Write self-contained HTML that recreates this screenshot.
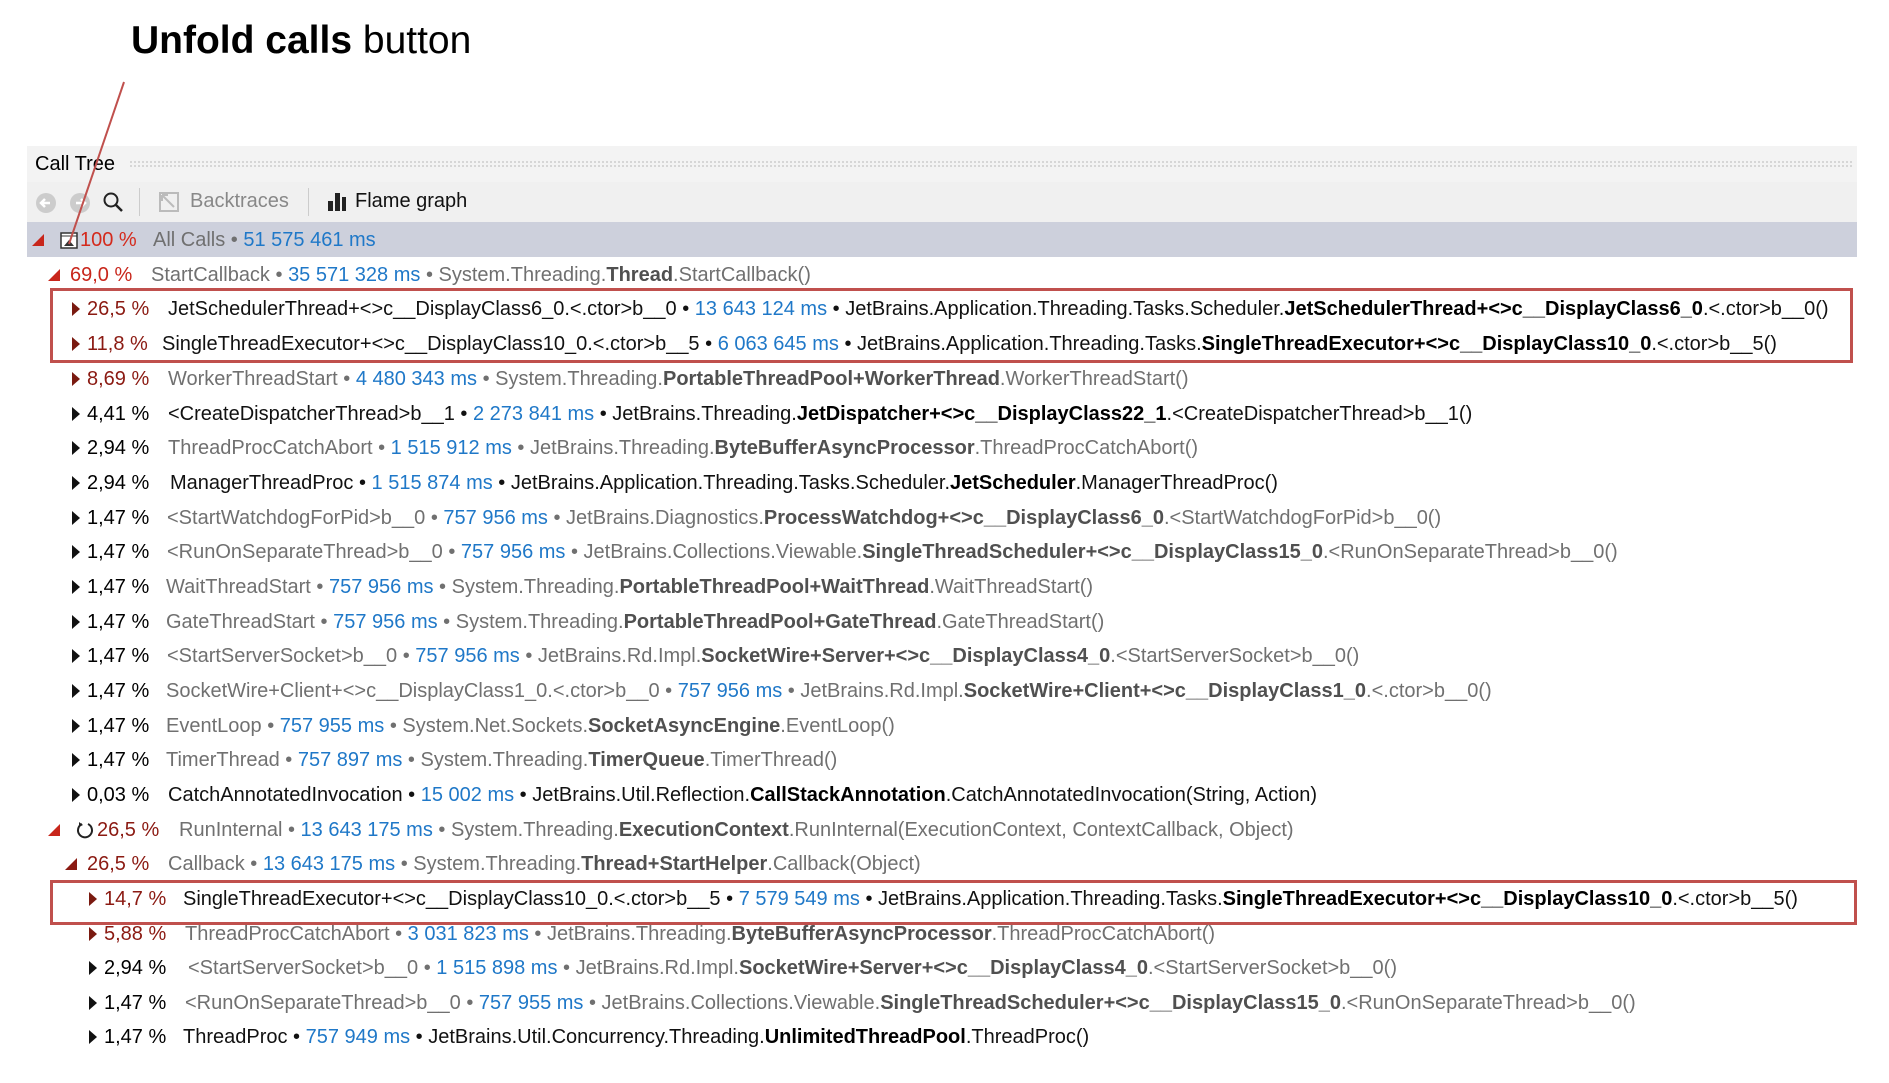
<!DOCTYPE html>
<html><head><meta charset="utf-8"><style>
body{margin:0;width:1889px;height:1083px;background:#fff;position:relative;overflow:hidden;font-family:"Liberation Sans",sans-serif}
.title{position:absolute;left:131px;top:19px;font-size:39px;color:#000}
.hdr{position:absolute;left:27px;top:146px;width:1830px;height:36px;background:#f3f3f3}
.hdr .dots{position:absolute;left:102px;right:4px;top:14px;height:8px;background-image:radial-gradient(#d4d4d4 1px,transparent 1.2px);background-size:4px 4px}
.hdr span{position:absolute;left:8px;top:7px;font-size:20px;color:#000}
.tb{position:absolute;left:27px;top:182px;width:1830px;height:40px;background:#f0f0f0}
.sel{position:absolute;left:27px;top:222px;width:1830px;height:35px;background:#cdd0dc}
.r{position:absolute;height:34px;line-height:34px;font-size:20px;white-space:nowrap;left:0;width:1889px}
.r>*{position:absolute;top:0}
.g{color:#707070}.g b{color:#505050}
.k{color:#111}.k b{color:#000}
.m{color:#1f78c8}
.p{font-size:20px}
.pr{color:#8b1a12}.pb{color:#000}.pR{color:#d42a1c}
.tc{width:0;height:0;border-top:7px solid transparent;border-bottom:7px solid transparent;border-left:8px solid #111;top:10px}
.tc.d{border-left-color:#7a1a10}
.te{width:0;height:0;border-left:12px solid transparent;border-bottom:12px solid #c8261b;top:11px}
.box{position:absolute;border:3px solid #c0504d;box-sizing:border-box}
</style></head><body>
<div class="title"><b>Unfold calls</b> button</div>
<div class="hdr"><div class="dots"></div><span>Call Tree</span></div>
<div class="tb">
<svg style="position:absolute;left:8px;top:9px" width="60" height="24"><circle cx="11" cy="12" r="10" fill="#ccc"/><path d="M15 12H7M10 8l-4 4 4 4" stroke="#fff" stroke-width="2.5" fill="none"/><circle cx="45" cy="12" r="10" fill="#ccc"/><path d="M41 12h8M46 8l4 4-4 4" stroke="#fff" stroke-width="2.5" fill="none"/></svg>
<svg style="position:absolute;left:74px;top:8px" width="24" height="24"><circle cx="10" cy="10" r="6.5" stroke="#222" stroke-width="2" fill="none"/><path d="M15 15l6 6" stroke="#222" stroke-width="2.5"/></svg>
<div style="position:absolute;left:112px;top:6px;width:1px;height:28px;background:#ccc"></div>
<svg style="position:absolute;left:130px;top:8px" width="24" height="24"><rect x="3" y="3" width="18" height="18" fill="none" stroke="#bbb" stroke-width="2"/><path d="M5 5l12 12M5 5h6M5 5v6" stroke="#bbb" stroke-width="2"/></svg>
<div style="position:absolute;left:163px;top:8px;font-size:20px;color:#888">Backtraces</div>
<div style="position:absolute;left:281px;top:6px;width:1px;height:28px;background:#ccc"></div>
<svg style="position:absolute;left:298px;top:8px" width="24" height="24"><rect x="3" y="11" width="5" height="10" fill="#222"/><rect x="10" y="3" width="5" height="18" fill="#222"/><rect x="17" y="7" width="4" height="14" fill="#222"/></svg>
<div style="position:absolute;left:328px;top:8px;font-size:20px;color:#111">Flame graph</div>
</div>
<div class="sel"></div>

<div class="r" style="top:223px"><i class="te" style="left:32px"></i><svg style="left:60px;top:9px" width="18" height="17"><rect x="1" y="1" width="16" height="15" fill="#fff" stroke="#333" stroke-width="1.5"/><path d="M1 4h16" stroke="#333"/><path d="M4 14l5-6 5 6z" fill="#333"/></svg><span class="p pR" style="left:80px">100 %</span><span class="g" style="left:153px">All Calls • <span class="m">51 575 461 ms</span></span></div>

<div class="r" style="top:258px"><i class="te" style="left:48px"></i><span class="p pR" style="left:70px;color:#c8261b">69,0 %</span><span class="g" style="left:151px">StartCallback • <span class="m">35 571 328 ms</span> • System.Threading.<b>Thread</b>.StartCallback()</span></div>

<div class="r" style="top:292px"><i class="tc d" style="left:72px"></i><span class="p pr" style="left:87px">26,5 %</span><span class="k" style="left:168px">JetSchedulerThread+&lt;&gt;c__DisplayClass6_0.&lt;.ctor&gt;b__0 • <span class="m">13 643 124 ms</span> • JetBrains.Application.Threading.Tasks.Scheduler.<b>JetSchedulerThread+&lt;&gt;c__DisplayClass6_0</b>.&lt;.ctor&gt;b__0()</span></div>
<div class="r" style="top:327px"><i class="tc d" style="left:72px"></i><span class="p pr" style="left:87px">11,8 %</span><span class="k" style="left:162px">SingleThreadExecutor+&lt;&gt;c__DisplayClass10_0.&lt;.ctor&gt;b__5 • <span class="m">6 063 645 ms</span> • JetBrains.Application.Threading.Tasks.<b>SingleThreadExecutor+&lt;&gt;c__DisplayClass10_0</b>.&lt;.ctor&gt;b__5()</span></div>
<div class="r" style="top:362px"><i class="tc d" style="left:72px"></i><span class="p pr" style="left:87px">8,69 %</span><span class="g" style="left:168px">WorkerThreadStart • <span class="m">4 480 343 ms</span> • System.Threading.<b>PortableThreadPool+WorkerThread</b>.WorkerThreadStart()</span></div>
<div class="r" style="top:397px"><i class="tc" style="left:72px"></i><span class="p pb" style="left:87px">4,41 %</span><span class="k" style="left:168px">&lt;CreateDispatcherThread&gt;b__1 • <span class="m">2 273 841 ms</span> • JetBrains.Threading.<b>JetDispatcher+&lt;&gt;c__DisplayClass22_1</b>.&lt;CreateDispatcherThread&gt;b__1()</span></div>
<div class="r" style="top:431px"><i class="tc" style="left:72px"></i><span class="p pb" style="left:87px">2,94 %</span><span class="g" style="left:168px">ThreadProcCatchAbort • <span class="m">1 515 912 ms</span> • JetBrains.Threading.<b>ByteBufferAsyncProcessor</b>.ThreadProcCatchAbort()</span></div>
<div class="r" style="top:466px"><i class="tc" style="left:72px"></i><span class="p pb" style="left:87px">2,94 %</span><span class="k" style="left:170px">ManagerThreadProc • <span class="m">1 515 874 ms</span> • JetBrains.Application.Threading.Tasks.Scheduler.<b>JetScheduler</b>.ManagerThreadProc()</span></div>
<div class="r" style="top:501px"><i class="tc" style="left:72px"></i><span class="p pb" style="left:87px">1,47 %</span><span class="g" style="left:167px">&lt;StartWatchdogForPid&gt;b__0 • <span class="m">757 956 ms</span> • JetBrains.Diagnostics.<b>ProcessWatchdog+&lt;&gt;c__DisplayClass6_0</b>.&lt;StartWatchdogForPid&gt;b__0()</span></div>
<div class="r" style="top:535px"><i class="tc" style="left:72px"></i><span class="p pb" style="left:87px">1,47 %</span><span class="g" style="left:167px">&lt;RunOnSeparateThread&gt;b__0 • <span class="m">757 956 ms</span> • JetBrains.Collections.Viewable.<b>SingleThreadScheduler+&lt;&gt;c__DisplayClass15_0</b>.&lt;RunOnSeparateThread&gt;b__0()</span></div>
<div class="r" style="top:570px"><i class="tc" style="left:72px"></i><span class="p pb" style="left:87px">1,47 %</span><span class="g" style="left:166px">WaitThreadStart • <span class="m">757 956 ms</span> • System.Threading.<b>PortableThreadPool+WaitThread</b>.WaitThreadStart()</span></div>
<div class="r" style="top:605px"><i class="tc" style="left:72px"></i><span class="p pb" style="left:87px">1,47 %</span><span class="g" style="left:166px">GateThreadStart • <span class="m">757 956 ms</span> • System.Threading.<b>PortableThreadPool+GateThread</b>.GateThreadStart()</span></div>
<div class="r" style="top:639px"><i class="tc" style="left:72px"></i><span class="p pb" style="left:87px">1,47 %</span><span class="g" style="left:167px">&lt;StartServerSocket&gt;b__0 • <span class="m">757 956 ms</span> • JetBrains.Rd.Impl.<b>SocketWire+Server+&lt;&gt;c__DisplayClass4_0</b>.&lt;StartServerSocket&gt;b__0()</span></div>
<div class="r" style="top:674px"><i class="tc" style="left:72px"></i><span class="p pb" style="left:87px">1,47 %</span><span class="g" style="left:166px">SocketWire+Client+&lt;&gt;c__DisplayClass1_0.&lt;.ctor&gt;b__0 • <span class="m">757 956 ms</span> • JetBrains.Rd.Impl.<b>SocketWire+Client+&lt;&gt;c__DisplayClass1_0</b>.&lt;.ctor&gt;b__0()</span></div>
<div class="r" style="top:709px"><i class="tc" style="left:72px"></i><span class="p pb" style="left:87px">1,47 %</span><span class="g" style="left:166px">EventLoop • <span class="m">757 955 ms</span> • System.Net.Sockets.<b>SocketAsyncEngine</b>.EventLoop()</span></div>
<div class="r" style="top:743px"><i class="tc" style="left:72px"></i><span class="p pb" style="left:87px">1,47 %</span><span class="g" style="left:166px">TimerThread • <span class="m">757 897 ms</span> • System.Threading.<b>TimerQueue</b>.TimerThread()</span></div>
<div class="r" style="top:778px"><i class="tc" style="left:72px"></i><span class="p pb" style="left:87px">0,03 %</span><span class="k" style="left:168px">CatchAnnotatedInvocation • <span class="m">15 002 ms</span> • JetBrains.Util.Reflection.<b>CallStackAnnotation</b>.CatchAnnotatedInvocation(String, Action)</span></div>
<div class="r" style="top:813px"><i class="te" style="left:48px"></i><svg style="left:76px;top:8px" width="18" height="18"><path d="M6 3A7 7 0 1 0 12 3" stroke="#222" stroke-width="2" fill="none"/><path d="M3 1l4 3-4 2z" fill="#222"/></svg><span class="p pr" style="left:97px">26,5 %</span><span class="g" style="left:179px">RunInternal • <span class="m">13 643 175 ms</span> • System.Threading.<b>ExecutionContext</b>.RunInternal(ExecutionContext, ContextCallback, Object)</span></div>
<div class="r" style="top:847px"><i class="te" style="left:65px;border-bottom-color:#8b1a12"></i><span class="p pr" style="left:87px">26,5 %</span><span class="g" style="left:168px">Callback • <span class="m">13 643 175 ms</span> • System.Threading.<b>Thread+StartHelper</b>.Callback(Object)</span></div>
<div class="r" style="top:882px"><i class="tc d" style="left:89px"></i><span class="p pr" style="left:104px">14,7 %</span><span class="k" style="left:183px">SingleThreadExecutor+&lt;&gt;c__DisplayClass10_0.&lt;.ctor&gt;b__5 • <span class="m">7 579 549 ms</span> • JetBrains.Application.Threading.Tasks.<b>SingleThreadExecutor+&lt;&gt;c__DisplayClass10_0</b>.&lt;.ctor&gt;b__5()</span></div>
<div class="r" style="top:917px"><i class="tc d" style="left:89px"></i><span class="p pr" style="left:104px">5,88 %</span><span class="g" style="left:185px">ThreadProcCatchAbort • <span class="m">3 031 823 ms</span> • JetBrains.Threading.<b>ByteBufferAsyncProcessor</b>.ThreadProcCatchAbort()</span></div>
<div class="r" style="top:951px"><i class="tc" style="left:89px"></i><span class="p pb" style="left:104px">2,94 %</span><span class="g" style="left:188px">&lt;StartServerSocket&gt;b__0 • <span class="m">1 515 898 ms</span> • JetBrains.Rd.Impl.<b>SocketWire+Server+&lt;&gt;c__DisplayClass4_0</b>.&lt;StartServerSocket&gt;b__0()</span></div>
<div class="r" style="top:986px"><i class="tc" style="left:89px"></i><span class="p pb" style="left:104px">1,47 %</span><span class="g" style="left:185px">&lt;RunOnSeparateThread&gt;b__0 • <span class="m">757 955 ms</span> • JetBrains.Collections.Viewable.<b>SingleThreadScheduler+&lt;&gt;c__DisplayClass15_0</b>.&lt;RunOnSeparateThread&gt;b__0()</span></div>
<div class="r" style="top:1020px"><i class="tc" style="left:89px"></i><span class="p pb" style="left:104px">1,47 %</span><span class="k" style="left:183px">ThreadProc • <span class="m">757 949 ms</span> • JetBrains.Util.Concurrency.Threading.<b>UnlimitedThreadPool</b>.ThreadProc()</span></div>

<div class="box" style="left:50px;top:288px;width:1803px;height:75px"></div>
<div class="box" style="left:50px;top:880px;width:1807px;height:45px"></div>
<svg style="position:absolute;left:0;top:0" width="1889" height="1083"><line x1="124" y1="82" x2="69" y2="244" stroke="#c0504d" stroke-width="2"/></svg>
</body></html>
